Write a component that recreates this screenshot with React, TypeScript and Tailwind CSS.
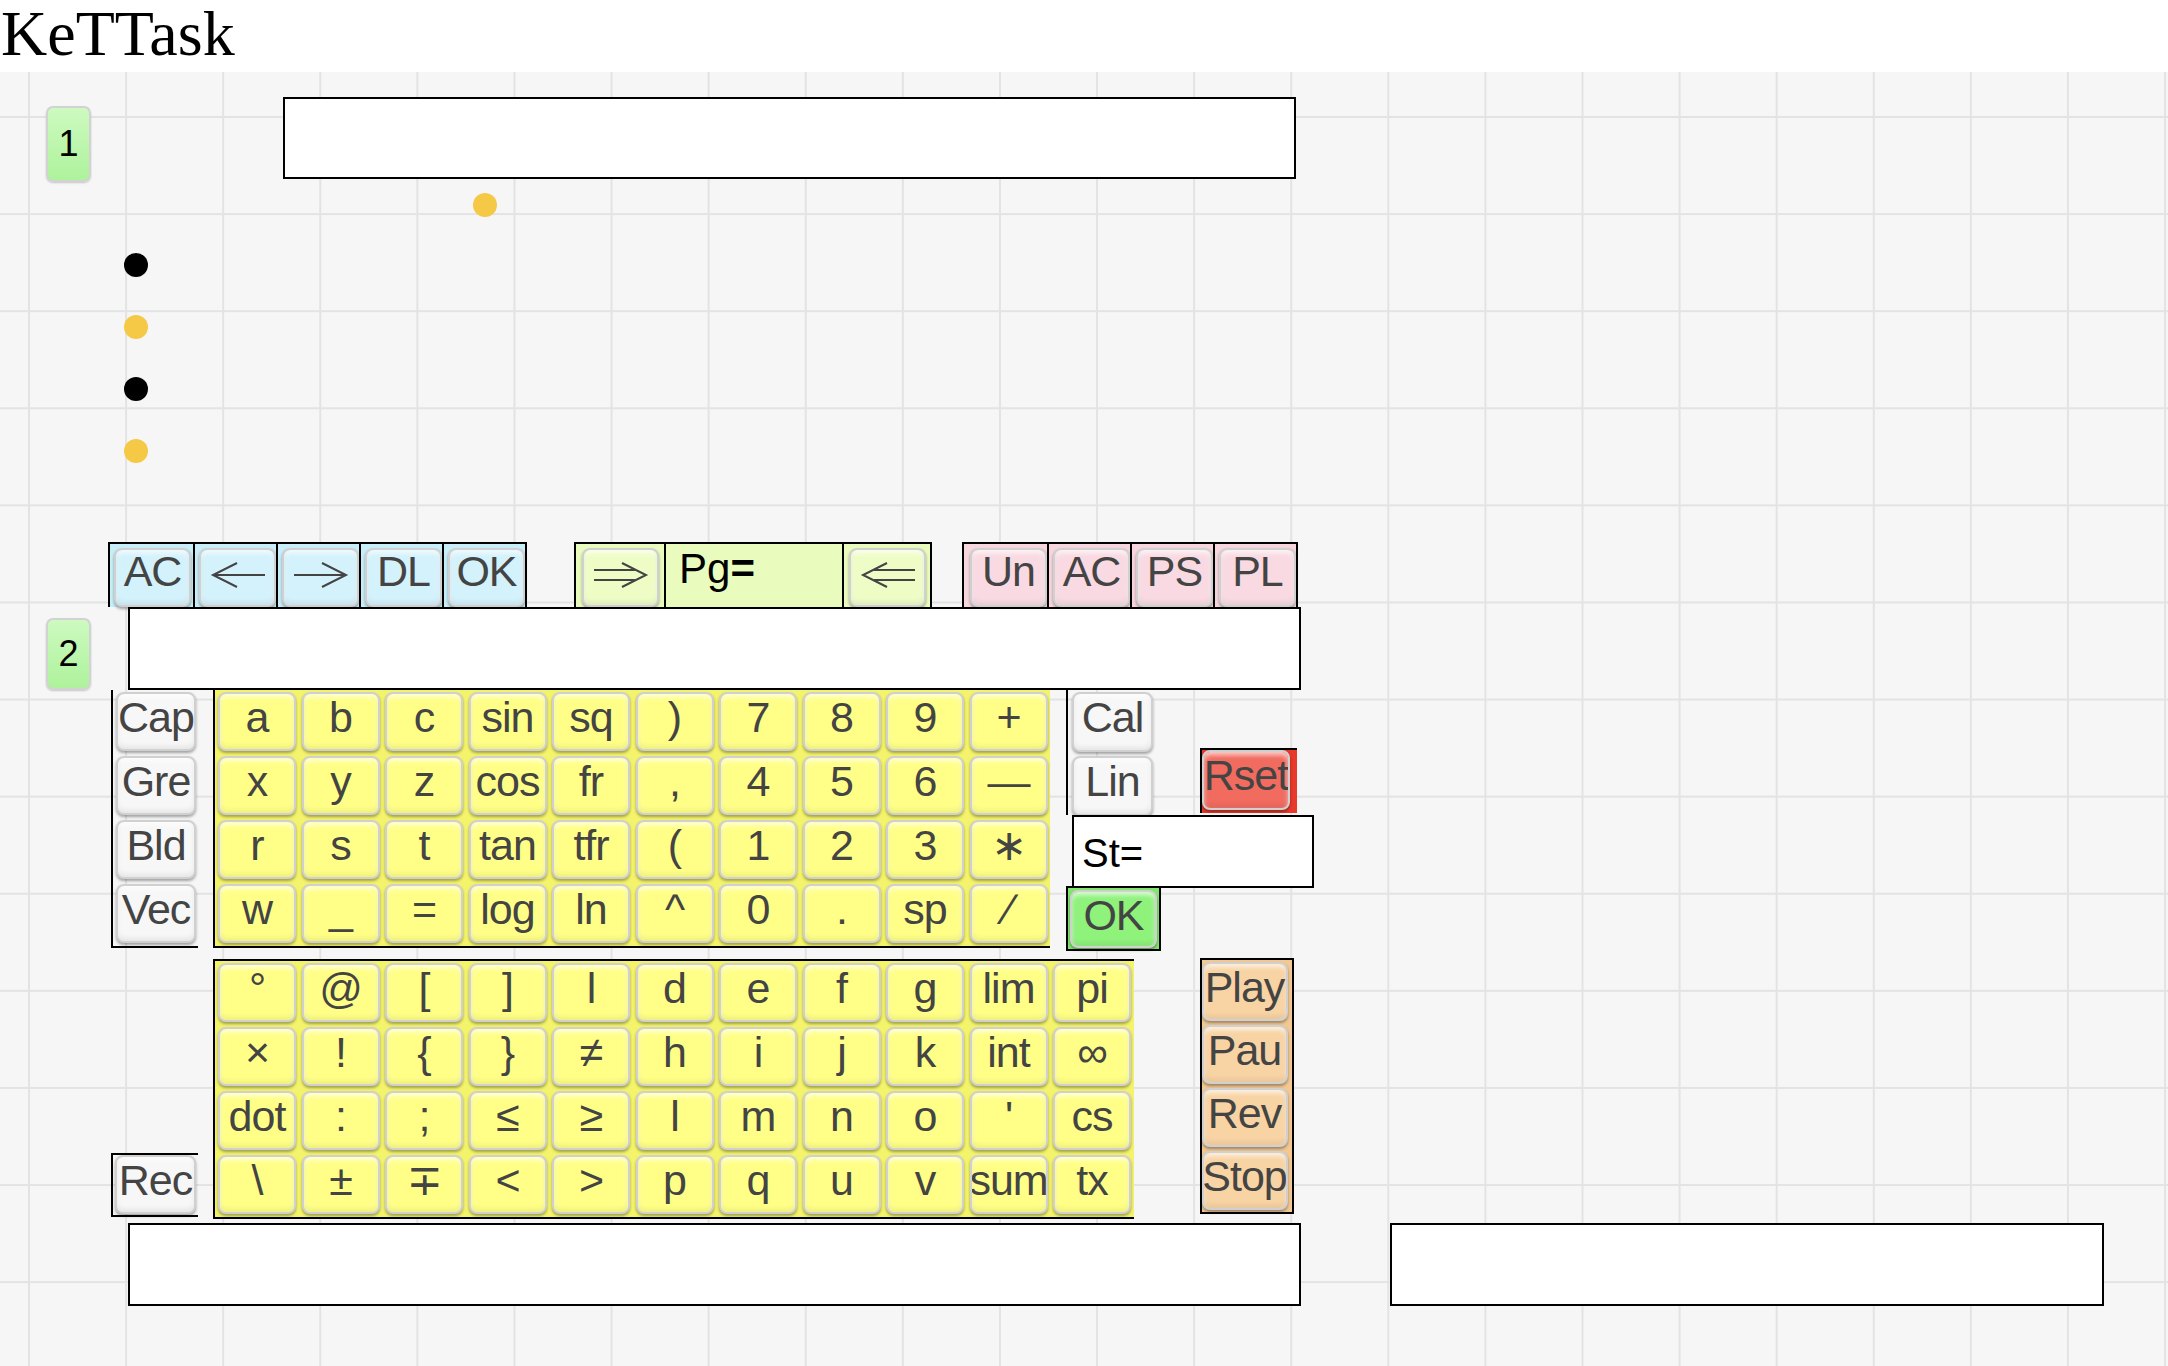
import React from 'react';

type Tone = 'yellow' | 'blue' | 'lime' | 'pink' | 'white' | 'green' | 'red' | 'orange';

const faces: Record<Tone, string> = {
  yellow: 'bg-[#ffff87]',
  blue: 'bg-[#d4f2fc]',
  lime: 'bg-[#eefdc6]',
  pink: 'bg-[#f9dae2]',
  white: 'bg-[#f7f7f7]',
  green: 'bg-[#8ef27b]',
  red: 'bg-[#f16b5f]',
  orange: 'bg-[#f8d3a3]',
};

function Key({
  label,
  tone,
  size,
  pad = 'pt-[2px]',
}: {
  label: React.ReactNode;
  tone: Tone;
  size: string;
  pad?: string;
}) {
  return (
    <div
      className={`flex justify-center overflow-hidden whitespace-nowrap rounded-[8px] border-2 border-[#d0d0d0] text-[43px] leading-[43px] tracking-[-1px] text-[#444] shadow-[0_2px_3px_rgba(0,0,0,0.35),inset_0_-3px_5px_rgba(0,0,0,0.07),inset_0_3px_5px_rgba(255,255,255,0.7)] ${faces[tone]} ${size} ${pad}`}
    >
      {label}
    </div>
  );
}

function Arrow({ dir }: { dir: 'left' | 'right' | 'dleft' | 'dright' }) {
  const d = {
    left: 'M55 13H3M27 1L3 13L27 25',
    right: 'M1 13H53M29 1L53 13L29 25',
    dright: 'M1 8H42M1 18H42M29 1L53 13L29 25',
    dleft: 'M55 8H14M55 18H14M27 1L3 13L27 25',
  }[dir];
  return (
    <svg width="56" height="26" viewBox="0 0 56 26" fill="none" stroke="#444" strokeWidth="2">
      <path d={d} />
    </svg>
  );
}

const upper = [
  ['a', 'b', 'c', 'sin', 'sq', ')', '7', '8', '9', '+'],
  ['x', 'y', 'z', 'cos', 'fr', ',', '4', '5', '6', '—'],
  ['r', 's', 't', 'tan', 'tfr', '(', '1', '2', '3', '∗'],
  ['w', '_', '=', 'log', 'ln', '^', '0', '.', 'sp', '∕'],
];

const lower = [
  ['°', '@', '[', ']', 'l', 'd', 'e', 'f', 'g', 'lim', 'pi'],
  ['×', '!', '{', '}', '≠', 'h', 'i', 'j', 'k', 'int', '∞'],
  ['dot', ':', ';', '≤', '≥', 'l', 'm', 'n', 'o', "'", 'cs'],
  ['\\', '±', '∓', '<', '>', 'p', 'q', 'u', 'v', 'sum', 'tx'],
];

const blueKeys: { label: React.ReactNode; arrow?: boolean }[] = [
  { label: 'AC' },
  { label: <Arrow dir="left" />, arrow: true },
  { label: <Arrow dir="right" />, arrow: true },
  { label: 'DL' },
  { label: 'OK' },
];

const pinkKeys = ['Un', 'AC', 'PS', 'PL'];

function Badge({ n, size }: { n: string; size: string }) {
  return (
    <div
      className={`flex items-center justify-center rounded-[7px] border-2 border-[#d2d2d2] bg-[linear-gradient(#cdfac0,#aef29c)] text-[36px] text-black shadow-[0_1px_2px_rgba(0,0,0,0.2)] ${size}`}
    >
      {n}
    </div>
  );
}

export default function App() {
  return (
    <div className="min-h-[1366px] w-full bg-white font-['Liberation_Sans','DejaVu_Sans',sans-serif]">
      {/* title */}
      <h1 className="h-[72px] pl-[1px] font-['Liberation_Serif',serif] text-[64px] font-normal leading-[68px] text-black">
        KeTTask
      </h1>

      {/* canvas */}
      <div className="flex min-h-[1294px] flex-col bg-[#f6f6f6] bg-[linear-gradient(to_right,#e3e3e3_0,#e3e3e3_2px,transparent_2px),linear-gradient(to_bottom,#e3e3e3_0,#e3e3e3_2px,transparent_2px)] bg-size-[97.1px_97.1px] bg-position-[28px_44px]">
        {/* line 1 */}
        <div className="mt-[25px] flex items-start">
          <div className="ml-[46px] mt-[9px]">
            <Badge n="1" size="h-[76px] w-[45px]" />
          </div>
          <div className="ml-[192px] h-[82px] w-[1013px] border-2 border-black bg-white" />
        </div>

        <div className="ml-[473px] mt-[11px] h-[24px] w-[24px] rounded-full bg-[#f5c945]" />

        <div className="ml-[124px] mt-[36px] flex flex-col gap-[38px]">
          <div className="h-[24px] w-[24px] rounded-full bg-black" />
          <div className="h-[24px] w-[24px] rounded-full bg-[#f5c945]" />
          <div className="h-[24px] w-[24px] rounded-full bg-black" />
          <div className="h-[24px] w-[24px] rounded-full bg-[#f5c945]" />
        </div>

        {/* toolbar */}
        <div className="mt-[79px] flex items-start">
          <div className="ml-[108px] flex h-[65px] border-x-2 border-t-2 border-black bg-[#c8eef9]">
            {blueKeys.map((k, i) => (
              <div key={i} className={`h-full w-[83px] pl-[4px] pt-[4px] ${i ? 'border-l-2 border-black' : ''}`}>
                <Key
                  label={k.label}
                  tone="blue"
                  size="h-[59px] w-[77px]"
                  pad={k.arrow ? 'items-center pb-[6px]' : 'pt-0'}
                />
              </div>
            ))}
          </div>

          <div className="ml-[47px] flex h-[65px] border-x-2 border-t-2 border-black bg-[#e9fcbd]">
            <div className="h-full w-[88px] pl-[6px] pt-[4px]">
              <Key label={<Arrow dir="dright" />} tone="lime" size="h-[59px] w-[77px]" pad="items-center pb-[6px]" />
            </div>
            <div className="h-full w-[178px] border-l-2 border-black pl-[13px] pt-[3px] text-[42px] leading-[43px] text-black">
              Pg<span className="font-bold">=</span>
            </div>
            <div className="h-full w-[88px] border-l-2 border-black pl-[5px] pt-[4px]">
              <Key label={<Arrow dir="dleft" />} tone="lime" size="h-[59px] w-[77px]" pad="items-center pb-[6px]" />
            </div>
          </div>

          <div className="ml-[30px] flex h-[65px] border-x-2 border-t-2 border-black bg-[#f7d6de]">
            {pinkKeys.map((k, i) => (
              <div key={i} className={`h-full w-[83px] pl-[4px] pt-[4px] ${i ? 'border-l-2 border-black' : 'pl-[6px]'}`}>
                <Key label={k} tone="pink" size="h-[59px] w-[77px]" pad="pt-0" />
              </div>
            ))}
          </div>
        </div>

        {/* line 2 */}
        <div className="flex items-start">
          <div className="ml-[46px] mt-[11px]">
            <Badge n="2" size="h-[72px] w-[45px]" />
          </div>
          <div className="ml-[37px] h-[83px] w-[1173px] border-2 border-black bg-white" />
        </div>

        {/* keyboard, upper part */}
        <div className="flex items-start">
          <div className="ml-[111px] flex w-[87px] flex-col border-b-2 border-l-2 border-black">
            {['Cap', 'Gre', 'Bld', 'Vec'].map((k) => (
              <div key={k} className="h-[64px] pl-[3px] pt-[2px]">
                <Key label={k} tone="white" size="h-[59px] w-[80px]" />
              </div>
            ))}
          </div>

          <div className="ml-[15px] grid grid-cols-[repeat(10,83.5px)] border-b-2 border-l-2 border-black bg-[#f4f46c]">
            {upper.flat().map((k, i) => (
              <div key={i} className="h-[64px] pl-[3px] pt-[2px]">
                <Key label={k} tone="yellow" size="h-[59px] w-[78px]" />
              </div>
            ))}
          </div>

          <div className="ml-[16px] flex w-[134px] flex-col">
            <div className="flex w-[89px] flex-col border-l-2 border-black">
              <div className="h-[64px] pl-[4px] pt-[2px]">
                <Key label="Cal" tone="white" size="h-[60px] w-[81px]" />
              </div>
              <div className="h-[61px] pl-[4px] pt-[2px]">
                <Key label="Lin" tone="white" size="h-[60px] w-[81px]" />
              </div>
            </div>
            <div className="ml-[6px] h-[73px] w-[242px] shrink-0 border-2 border-black bg-white pl-[8px] pt-[16px] text-[40px] leading-[40px] text-black">
              St=
            </div>
            <div className="-mt-[2px] h-[65px] w-[95px] border-2 border-black bg-[#7fe86b] pl-[2px] pt-[2px]">
              <Key label="OK" tone="green" size="h-[58px] w-[87px]" />
            </div>
          </div>

          <div className="mt-[58px] h-[65px] w-[97px] border-l-2 border-t-2 border-black bg-[#e8392b]">
            <Key label="Rset" tone="red" size="h-[60px] w-[88px]" />
          </div>
        </div>

        {/* keyboard, lower part */}
        <div className="flex items-start">
          <div className="ml-[111px] mt-[202px] h-[64px] w-[87px] border-y-2 border-l-2 border-black pl-[2px]">
            <Key label="Rec" tone="white" size="h-[59px] w-[81px]" />
          </div>

          <div className="ml-[15px] mt-[8px] grid grid-cols-[repeat(11,83.5px)] border-y-2 border-l-2 border-black bg-[#f4f46c]">
            {lower.flat().map((k, i) => (
              <div key={i} className="h-[64px] pl-[3px] pt-[2px]">
                <Key label={k} tone="yellow" size="h-[59px] w-[78px]" />
              </div>
            ))}
          </div>

          <div className="ml-[66px] mt-[7px] flex w-[94px] flex-col border-2 border-black bg-[#f3c893]">
            {['Play', 'Pau', 'Rev', 'Stop'].map((k) => (
              <div key={k} className="h-[63px] pt-[2px]">
                <Key label={k} tone="orange" size="h-[59px] w-[86px]" />
              </div>
            ))}
          </div>
        </div>

        {/* bottom boxes */}
        <div className="mt-[4px] flex items-start">
          <div className="ml-[128px] h-[83px] w-[1173px] border-2 border-black bg-white" />
          <div className="ml-[89px] h-[83px] w-[714px] border-2 border-black bg-white" />
        </div>
      </div>
    </div>
  );
}
